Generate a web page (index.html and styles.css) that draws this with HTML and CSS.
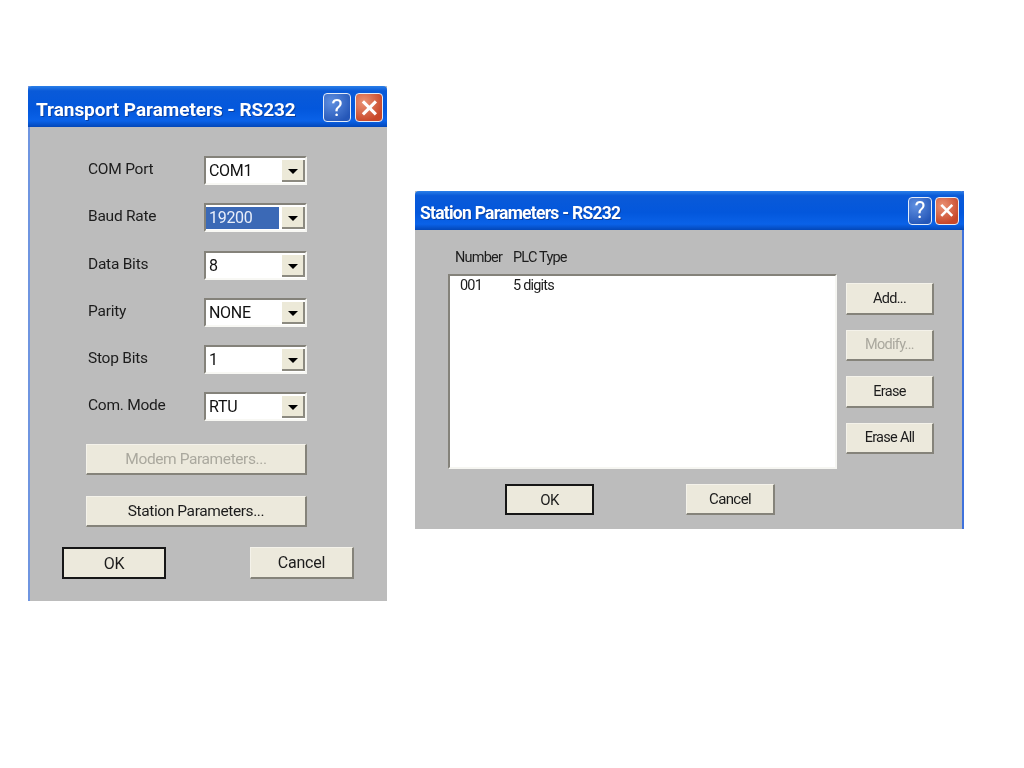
FILE: index.html
```html
<!DOCTYPE html>
<html lang="en">
<head>
<meta charset="utf-8">
<title>RS232 Parameters</title>
<link rel="stylesheet" href="styles.css">
</head>
<body>
<section class="window transport">
  <header class="titlebar">
    <span class="title">Transport Parameters - RS232</span>
    <span class="caption-btn help">?</span>
    <span class="caption-btn close"><svg viewBox="0 0 16 16"><path d="M3 3L13 13M13 3L3 13"/></svg></span>
  </header>
  <div class="body">
    <div class="fields">
      <div class="field"><span class="label">COM Port</span><div class="combo"><span class="value">COM1</span><span class="arrow"></span></div></div>
      <div class="field"><span class="label">Baud Rate</span><div class="combo"><span class="value selected">19200</span><span class="arrow"></span></div></div>
      <div class="field"><span class="label">Data Bits</span><div class="combo"><span class="value">8</span><span class="arrow"></span></div></div>
      <div class="field"><span class="label">Parity</span><div class="combo"><span class="value">NONE</span><span class="arrow"></span></div></div>
      <div class="field"><span class="label">Stop Bits</span><div class="combo"><span class="value">1</span><span class="arrow"></span></div></div>
      <div class="field"><span class="label">Com. Mode</span><div class="combo"><span class="value">RTU</span><span class="arrow"></span></div></div>
    </div>
    <div class="wide-buttons">
      <button class="btn wide" disabled>Modem Parameters...</button>
      <button class="btn wide">Station Parameters...</button>
    </div>
    <div class="actions">
      <button class="btn act default">OK</button>
      <button class="btn act">Cancel</button>
    </div>
  </div>
</section>

<section class="window station">
  <header class="titlebar">
    <span class="title">Station Parameters - RS232</span>
    <span class="caption-btn help">?</span>
    <span class="caption-btn close"><svg viewBox="0 0 16 16"><path d="M3 3L13 13M13 3L3 13"/></svg></span>
  </header>
  <div class="body">
    <div class="columns"><span class="col-number">Number</span><span>PLC Type</span></div>
    <div class="main">
      <div class="list">
        <div class="list-row"><span class="cell-number">001</span><span>5 digits</span></div>
      </div>
      <div class="side">
        <button class="btn side-btn">Add...</button>
        <button class="btn side-btn" disabled>Modify...</button>
        <button class="btn side-btn">Erase</button>
        <button class="btn side-btn">Erase All</button>
      </div>
    </div>
    <div class="actions">
      <button class="btn act default">OK</button>
      <button class="btn act">Cancel</button>
    </div>
  </div>
</section>
</body>
</html>
```
FILE: styles.css
```css
* { box-sizing: border-box; }
html, body { margin: 0; height: 100%; background: #fff; }
body {
  position: relative;
  overflow: hidden;
  font-family: Roboto, "Liberation Sans", Arial, sans-serif;
  color: #1c1c1c;
  filter: blur(0.4px);
}
.window {
  position: absolute;
  display: flex;
  flex-direction: column;
  background: #bcbcbc;
}
.transport { left: 28px; top: 86px; width: 359px; height: 515px; border-left: 2px solid #6f95e0; }
.station { left: 415px; top: 191px; width: 549px; height: 338px; border-right: 2px solid #3f72dc; }

.titlebar {
  display: flex;
  align-items: center;
  flex: none;
  color: #fff;
  font-weight: 700;
  border-radius: 4px 4px 0 0;
  background: linear-gradient(#2a7fe8 0, #0a5ad8 12%, #0357dc 55%, #0a62e8 85%, #0347b8 100%);
}
.transport .titlebar { height: 41px; margin-left: -2px; padding: 0 4px 0 8px; font-size: 19px; }
.station .titlebar { height: 39px; margin-right: -2px; padding: 0 5px 0 5px; font-size: 17.5px; }
.transport .title { padding-top: 5px; letter-spacing: -0.05px; }
.station .title { padding-top: 4px; letter-spacing: -0.75px; }
.title { flex: 1; white-space: nowrap; text-shadow: 1px 1px 0 #0a3fa0; }

.caption-btn {
  display: flex;
  align-items: center;
  justify-content: center;
  flex: none;
  border: 1px solid #e4ecf8;
  border-radius: 4px;
  color: #fff;
  font-weight: 400;
}
.transport .caption-btn { width: 28px; height: 29px; font-size: 24px; margin-top: 2px; }
.transport .help { margin-right: 4px; }
.station .caption-btn { width: 24px; height: 28px; font-size: 23px; }
.station .help { margin-right: 3px; }
.help { background: radial-gradient(circle at 30% 30%, #5f8fe0, #2557b8 80%); }
.close { background: radial-gradient(circle at 30% 30%, #ea9274, #c8482a 75%); }
.close svg { width: 80%; height: 80%; fill: none; stroke: #fff; stroke-width: 2.4; }

.body { flex: 1; display: flex; flex-direction: column; min-height: 0; }

/* Transport dialog */
.transport .body { padding: 29px 0 0 0; font-size: 15.5px; }
.fields { display: flex; flex-direction: column; gap: 18.3px; padding-left: 58px; }
.field { display: grid; grid-template-columns: 116px 103px; align-items: center; height: 29px; }
.label { padding-bottom: 3px; letter-spacing: -0.25px; }
.combo {
  display: flex;
  height: 29px;
  padding: 2px 0 1px 2px;
  background: #fff;
  border: 2px solid;
  border-color: #84827a #f4f4f0 #f8f8f4 #84827a;
  color: #111;
  font-size: 16px;
}
.value { flex: 1; padding: 0 1px; line-height: 21px; min-width: 0; letter-spacing: -0.3px; }
.value.selected { background: #3b69b6; color: #e8eefa; margin: 0 3px 0 -2px; padding-left: 3px; }
.arrow {
  position: relative;
  flex: none;
  width: 23px;
  background: #ece9d8;
  border-right: 2px solid #8c8a80;
  border-bottom: 2px solid #8c8a80;
}
.arrow::after {
  content: "";
  position: absolute;
  left: 6px;
  top: 9px;
  border: 5px solid transparent;
  border-top: 5px solid #000;
  border-bottom: 0;
}

.btn {
  padding: 0;
  font: inherit;
  color: #1c1c1c;
  background: #ece9dc;
  border: 1px solid #f4f2ea;
  border-right: 2px solid #85837a;
  border-bottom: 2px solid #85837a;
}
.btn:disabled { color: #aaa89e; }
.btn.default { border: 2px solid #161616; }

.wide-buttons { display: flex; flex-direction: column; gap: 21px; margin: 23px 0 0 56px; width: 221px; }
.wide { height: 31px; }
.transport .wide { font-size: 15.5px; letter-spacing: -0.4px; }
.transport .actions { display: flex; justify-content: space-between; margin: 20px 0 0 32px; width: 292px; }
.transport .act { width: 104px; height: 32px; font-size: 16px; letter-spacing: -0.2px; }

/* Station dialog */
.station .body { padding: 0 0 0 33px; font-size: 14.5px; }
.columns { display: flex; height: 44px; align-items: flex-end; padding: 0 0 8px 7px; letter-spacing: -0.8px; }
.col-number { width: 58px; }
.main { display: flex; gap: 9px; }
.list {
  width: 389px;
  height: 195px;
  padding: 1px 0 0 10px;
  background: #fff;
  border: 2px solid;
  border-color: #84827a #f6f6f2 #f6f6f2 #84827a;
  letter-spacing: -0.8px;
}
.list-row { display: flex; line-height: 18px; }
.cell-number { width: 53px; }
.side { display: flex; flex-direction: column; gap: 15px; padding-top: 9px; width: 88px; }
.side-btn { height: 31.5px; letter-spacing: -0.7px; }
.station .actions { display: flex; gap: 92px; margin: 15px 0 0 57px; }
.station .act { width: 89px; height: 31px; font-size: 15px; letter-spacing: -0.6px; }
```
